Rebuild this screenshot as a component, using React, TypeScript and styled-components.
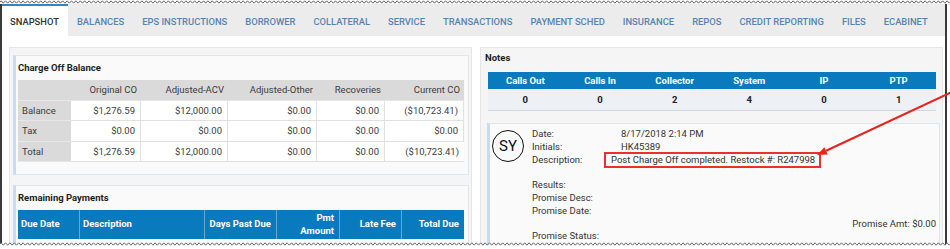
import React from 'react';
import styled, { createGlobalStyle } from 'styled-components';

const GlobalStyle = createGlobalStyle`
  html, body { margin: 0; padding: 0; background: #fff; }
  body { font-family: Roboto, "Liberation Sans", Arial, sans-serif; }
  * { box-sizing: border-box; }
`;

const Frame = styled.div`
  position: relative;
  width: 950px;
  height: 249px;
  overflow: hidden;
  background: #fff;
`;

const Window = styled.div`
  margin-top: 4px;
  width: 947px;
  height: 245px;
  border-left: 2px solid #3a3a3a;
  border-right: 2px solid #3a3a3a;
  font-size: 9.5px;
  color: #3c3c3c;
  overflow: hidden;
`;

const TabBar = styled.nav`
  display: flex;
  height: 32px;
  background: #ececec;
`;

const Tab = styled.div<{ $active?: boolean }>`
  display: flex;
  align-items: center;
  padding: 0 9px 0 ${p => (p.$active ? '8px' : '9px')};
  font-size: 9.4px;
  font-weight: 500;
  text-transform: uppercase;
  white-space: nowrap;
  color: ${p => (p.$active ? '#333' : '#5584b2')};
  background: ${p => (p.$active ? '#fff' : 'transparent')};
  border-top: 2px solid ${p => (p.$active ? '#2f86c8' : 'transparent')};
`;

const Content = styled.div`
  display: flex;
  gap: 8px;
  padding: 11px 2px 0 7px;
`;

const Card = styled.div<{ $pad: string }>`
  width: 463px;
  height: 200px;
  background: #f5f5f5;
  border: 1px solid #e6e6e6;
  padding: ${p => p.$pad};
  display: flex;
  flex-direction: column;
`;

const Section = styled.section`
  background: #fafafa;
  border: 1px solid #dbe7f1;
  border-left: 3px solid #c7dcee;
  padding: 0 4px 12px 2px;
  & + & {
    margin-top: 10px;
  }
`;

const SectionTitle = styled.div`
  height: 24px;
  display: flex;
  align-items: center;
  padding-bottom: 1px;
  font-weight: 700;
  color: #1e1e1e;
`;

const DataGrid = styled.div<{ $cols: string }>`
  display: grid;
  grid-template-columns: ${p => p.$cols};
`;

const GrayCell = styled.div<{ $right?: boolean }>`
  height: 20.5px;
  display: flex;
  align-items: center;
  justify-content: ${p => (p.$right ? 'flex-end' : 'flex-start')};
  padding: 0 4px;
  background: #dadada;
  color: #3c3c3c;
  border-bottom: 1px solid #e6e6e6;
`;

const ValueCell = styled.div`
  height: 20.5px;
  display: flex;
  align-items: center;
  justify-content: flex-end;
  padding: 0 5px;
  background: #fff;
  color: #3c3c3c;
  border-bottom: 1px solid #e0e0e0;
  border-right: 1px solid #e0e0e0;
  &:last-child {
    border-right: none;
  }
`;

const BlueHead = styled.div<{ $right?: boolean }>`
  height: 29px;
  display: flex;
  align-items: center;
  justify-content: ${p => (p.$right ? 'flex-end' : 'flex-start')};
  text-align: ${p => (p.$right ? 'right' : 'left')};
  padding: 0 5px 0 3px;
  background: #0a7abf;
  color: #fff;
  font-weight: 700;
  line-height: 12.5px;
  border-right: 1px solid #62a9d8;
  &:last-child {
    border-right: none;
  }
`;

const NotesTitle = styled.div`
  height: 12px;
  line-height: 12px;
  font-weight: 700;
  color: #1e1e1e;
`;

const StatsGrid = styled.div`
  margin: 8px 4px 0 3px;
  display: grid;
  grid-template-columns: repeat(6, 1fr);
`;

const StatHead = styled.div`
  height: 17px;
  display: flex;
  align-items: center;
  justify-content: center;
  background: #0a7abf;
  color: #fff;
  font-weight: 700;
`;

const StatValue = styled.div`
  height: 22px;
  display: flex;
  align-items: center;
  justify-content: center;
  background: #edf0f5;
  border-bottom: 1px solid #d2d8e0;
  color: #222;
  font-weight: 700;
`;

const NoteCard = styled.div`
  margin: 12px 0 0 2px;
  display: flex;
  gap: 8px;
  padding: 4px 3px 0 2px;
  height: 140px;
  background: #fafafa;
  border: 1px solid #dde6ee;
  border-left: 3px solid #c7dcee;
`;

const Avatar = styled.div`
  flex: none;
  width: 32px;
  height: 32px;
  margin-top: 2px;
  border-radius: 50%;
  border: 1.5px solid #111;
  display: flex;
  align-items: center;
  justify-content: center;
  font-size: 15px;
  color: #111;
`;

const NoteBody = styled.div`
  flex: 1;
  display: grid;
  grid-template-columns: 89px 1fr;
  grid-auto-rows: 12.8px;
  line-height: 12.8px;
  color: #333;
`;

const FullRow = styled.div<{ $right?: boolean }>`
  grid-column: 1 / -1;
  text-align: ${p => (p.$right ? 'right' : 'left')};
`;

const Highlight = styled.span`
  display: block;
  width: fit-content;
  margin: -2px 0 -2px -17px;
  padding: 0 4px 0 5px;
  border: 2px solid #e8322b;
  line-height: 12.8px;
  white-space: nowrap;
`;

const Overlay = styled.svg`
  position: absolute;
  left: 0;
  top: 0;
  pointer-events: none;
`;

const tabs = [
  'Snapshot', 'Balances', 'EPS Instructions', 'Borrower', 'Collateral', 'Service',
  'Transactions', 'Payment Sched', 'Insurance', 'Repos', 'Credit Reporting', 'Files', 'eCabinet',
];

const coCols = '53px 70px 87px 89px 68px 79px';
const coHeads = ['Original CO', 'Adjusted-ACV', 'Adjusted-Other', 'Recoveries', 'Current CO'];
const coRows: [string, string[]][] = [
  ['Balance', ['$1,276.59', '$12,000.00', '$0.00', '$0.00', '($10,723.41)']],
  ['Tax', ['$0.00', '$0.00', '$0.00', '$0.00', '$0.00']],
  ['Total', ['$1,276.59', '$12,000.00', '$0.00', '$0.00', '($10,723.41)']],
];

const rpCols = '62px 125px 72px 63px 62px 62px';

const stats: [string, string][] = [
  ['Calls Out', '0'], ['Calls In', '0'], ['Collector', '2'], ['System', '4'], ['IP', '0'], ['PTP', '1'],
];

function wave(y: number, amp: number, period: number, width: number) {
  let d = `M0 ${y}`;
  let s = -1;
  for (let x = 0; x < width + period; x += period / 2) {
    d += ` Q${x + period / 4} ${y + s * amp * 2} ${x + period / 2} ${y}`;
    s = -s;
  }
  return d;
}

const topWave = wave(2, 1.2, 4.4, 950);
const bottomWave = wave(244, 1.2, 4.4, 950);

export default function App() {
  const tipX = 817;
  const tipY = 155;
  const sx = 952;
  const sy = 92;
  const len = Math.hypot(sx - tipX, sy - tipY);
  const ux = (sx - tipX) / len;
  const uy = (sy - tipY) / len;
  const bx = tipX + ux * 10;
  const by = tipY + uy * 10;
  const px = -uy * 4;
  const py = ux * 4;

  return (
    <>
      <GlobalStyle />
      <Frame>
        <Window>
          <TabBar>
            {tabs.map((t, i) => (
              <Tab key={t} $active={i === 0}>{t}</Tab>
            ))}
          </TabBar>
          <Content>
            <Card $pad="7px 2px 0 3px">
              <Section>
                <SectionTitle>Charge Off Balance</SectionTitle>
                <DataGrid $cols={coCols}>
                  <GrayCell />
                  {coHeads.map(h => (
                    <GrayCell key={h} $right>{h}</GrayCell>
                  ))}
                  {coRows.map(([label, vals]) => (
                    <React.Fragment key={label}>
                      <GrayCell>{label}</GrayCell>
                      {vals.map((v, i) => (
                        <ValueCell key={i}>{v}</ValueCell>
                      ))}
                    </React.Fragment>
                  ))}
                </DataGrid>
              </Section>
              <Section>
                <SectionTitle>Remaining Payments</SectionTitle>
                <DataGrid $cols={rpCols}>
                  <BlueHead>Due Date</BlueHead>
                  <BlueHead>Description</BlueHead>
                  <BlueHead $right>Days Past Due</BlueHead>
                  <BlueHead $right>Pmt<br />Amount</BlueHead>
                  <BlueHead $right>Late Fee</BlueHead>
                  <BlueHead $right>Total Due</BlueHead>
                </DataGrid>
              </Section>
            </Card>
            <Card $pad="4px 2px 0 4px">
              <NotesTitle>Notes</NotesTitle>
              <StatsGrid>
                {stats.map(([h]) => (
                  <StatHead key={h}>{h}</StatHead>
                ))}
                {stats.map(([h, v]) => (
                  <StatValue key={h}>{v}</StatValue>
                ))}
              </StatsGrid>
              <NoteCard>
                <Avatar>SY</Avatar>
                <NoteBody>
                  <span>Date:</span>
                  <span>8/17/2018 2:14 PM</span>
                  <span>Initials:</span>
                  <span>HK45389</span>
                  <span>Description:</span>
                  <div>
                    <Highlight>Post Charge Off completed. Restock #: R247998</Highlight>
                  </div>
                  <FullRow />
                  <span>Results:</span>
                  <span />
                  <span>Promise Desc:</span>
                  <span />
                  <span>Promise Date:</span>
                  <span />
                  <FullRow $right>Promise Amt: $0.00</FullRow>
                  <span>Promise Status:</span>
                  <span />
                </NoteBody>
              </NoteCard>
            </Card>
          </Content>
        </Window>
        <Overlay width={950} height={249} viewBox="0 0 950 249">
          <path d={`${topWave} L950 0 L0 0 Z`} fill="#fff" />
          <path d={topWave} fill="none" stroke="#555" strokeWidth={0.9} />
          <path d={`${bottomWave} L950 249 L0 249 Z`} fill="#fff" />
          <path d={bottomWave} fill="none" stroke="#555" strokeWidth={0.9} />
          <line x1={sx} y1={sy} x2={bx} y2={by} stroke="#e8231d" strokeWidth={2} />
          <polygon
            points={`${tipX},${tipY} ${bx + px},${by + py} ${bx - px},${by - py}`}
            fill="#e8231d"
          />
        </Overlay>
      </Frame>
    </>
  );
}
